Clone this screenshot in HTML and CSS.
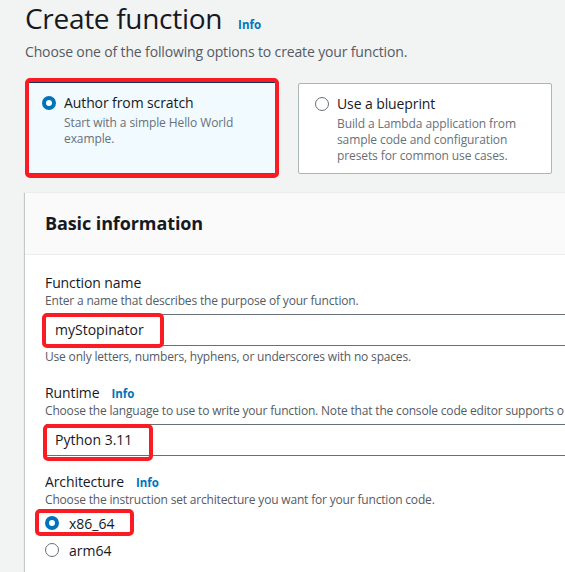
FILE: index.html
```html
<!DOCTYPE html>
<html lang="en">
<head>
<meta charset="utf-8">
<title>Create function</title>
<link rel="stylesheet" href="styles.css">
</head>
<body>
<div class="page">
  <h1 class="page-title">Create function <a class="info">Info</a></h1>
  <p class="page-sub">Choose one of the following options to create your function.</p>

  <div class="tiles">
    <div class="tile tile-selected">
      <span class="radio radio-on"></span>
      <div class="tile-text">
        <div class="tile-title">Author from scratch</div>
        <div class="tile-desc">Start with a simple Hello World example.</div>
      </div>
      <span class="mark mark-tile"></span>
    </div>
    <div class="tile">
      <span class="radio"></span>
      <div class="tile-text">
        <div class="tile-title">Use a blueprint</div>
        <div class="tile-desc">Build a Lambda application from sample code and configuration presets for common use cases.</div>
      </div>
    </div>
  </div>

  <section class="panel">
    <header class="panel-head"><h2>Basic information</h2></header>
    <div class="panel-body">
      <div class="field">
        <div class="label">Function name</div>
        <div class="desc">Enter a name that describes the purpose of your function.</div>
        <div class="input">myStopinator<span class="mark mark-name"></span></div>
        <div class="hint">Use only letters, numbers, hyphens, or underscores with no spaces.</div>
      </div>
      <div class="field">
        <div class="label">Runtime <a class="info">Info</a></div>
        <div class="desc">Choose the language to use to write your function. Note that the console code editor supports o</div>
        <div class="input">Python 3.11<span class="mark mark-runtime"></span></div>
      </div>
      <div class="field field-arch">
        <div class="label">Architecture <a class="info">Info</a></div>
        <div class="desc">Choose the instruction set architecture you want for your function code.</div>
        <div class="opt"><span class="radio radio-on"></span>x86_64<span class="mark mark-arch"></span></div>
        <div class="opt"><span class="radio"></span>arm64</div>
      </div>
    </div>
  </section>
</div>
</body>
</html>
```

FILE: styles.css
```css
html, body {
  margin: 0;
  padding: 0;
  background: #f2f3f3;
  overflow: hidden;
}
body {
  font-family: "Open Sans", "Noto Sans", sans-serif;
  color: #16191f;
  width: 565px;
  height: 572px;
}
.page {
  padding: 0 0 0 25px;
  width: 640px;
}
.page-title {
  margin: 0;
  height: 36px;
  font-size: 28px;
  line-height: 36px;
  font-weight: 400;
  letter-spacing: -0.3px;
  display: flex;
  align-items: baseline;
  overflow: visible;
}
.info {
  color: #0073bb;
  font-size: 11.5px;
  line-height: 16px;
  font-weight: 700;
  letter-spacing: 0;
  margin-left: 12px;
}
.page-title .info {
  margin-left: 16px;
}
.page-sub {
  margin: 6px 0 0;
  height: 20px;
  font-size: 14px;
  line-height: 20px;
  letter-spacing: -0.15px;
  color: #545b64;
}

.tiles {
  display: flex;
  gap: 19px;
  padding: 4px 0;
  margin-top: 16px;
}
.tile {
  position: relative;
  box-sizing: border-box;
  width: 254px;
  height: 91px;
  margin-top: 1px;
  border: 1px solid #aab7b8;
  border-radius: 2px;
  background: #fff;
  padding: 10px 12px 10px 16px;
  display: flex;
  gap: 8px;
}
.tile-selected {
  height: 92px;
  margin-top: 0;
  background: #f1faff;
  border-color: #0073bb;
  border-top-color: #16325c;
}
.tile-text {
  flex: 1;
}
.tile-title {
  font-size: 14px;
  line-height: 20px;
  letter-spacing: -0.1px;
}
.tile-desc {
  margin-top: 2px;
  font-size: 12px;
  line-height: 16px;
  color: #687078;
  letter-spacing: -0.1px;
}
.tile .radio {
  margin-top: 3px;
}

.radio {
  flex: none;
  box-sizing: border-box;
  width: 14px;
  height: 14px;
  border-radius: 50%;
  border: 1.5px solid #687078;
  background: #fff;
}
.radio-on {
  border: 4px solid #0073bb;
}

.mark {
  position: absolute;
  box-sizing: border-box;
  border: 4px solid #fb1b22;
  border-radius: 5px;
  pointer-events: none;
}
.mark-tile {
  left: -1px;
  top: -5px;
  width: 254px;
  height: 100px;
}
.mark-name {
  left: -4px;
  top: -2px;
  width: 122px;
  height: 35px;
}
.mark-runtime {
  left: -3px;
  top: -1px;
  width: 110px;
  height: 37px;
}
.mark-arch {
  left: -10px;
  top: -1px;
  width: 99px;
  height: 27px;
}

.panel {
  margin-top: 14px;
  background: #fff;
  box-shadow: 0 1px 1px 0 rgba(0, 28, 36, 0.3), 1px 1px 1px 0 rgba(0, 28, 36, 0.15), -1px 1px 1px 0 rgba(0, 28, 36, 0.15);
  border-top: 1px solid #eaeded;
  height: 420px;
}
.panel-head {
  background: #fafafa;
  border-bottom: 1px solid #eaeded;
  padding: 16px 20px 17px;
}
.panel-head h2 {
  margin: 0;
  font-size: 18px;
  line-height: 28px;
  font-weight: 700;
  letter-spacing: -0.1px;
}
.panel-body {
  padding: 18px 20px 0;
}
.field + .field {
  margin-top: 18px;
}
.field-arch {
  margin-top: 16px !important;
}
.label {
  font-size: 14px;
  line-height: 20px;
  display: flex;
  align-items: baseline;
  letter-spacing: -0.1px;
}
.desc, .hint {
  font-size: 12px;
  line-height: 16px;
  color: #545b64;
  white-space: nowrap;
  letter-spacing: -0.18px;
}
.hint {
  margin-top: 3px;
}
.input {
  position: relative;
  box-sizing: border-box;
  height: 32px;
  margin-top: 5px;
  border: 1px solid #687078;
  border-radius: 2px;
  padding: 0 9px;
  font-size: 14px;
  line-height: 30px;
}
.opt {
  position: relative;
  display: flex;
  align-items: center;
  gap: 10px;
  height: 26px;
  font-size: 14px;
}
.field-arch .desc {
  margin-bottom: 2px;
}
.field-arch .opt + .opt {
  margin-top: 1px;
}
```
